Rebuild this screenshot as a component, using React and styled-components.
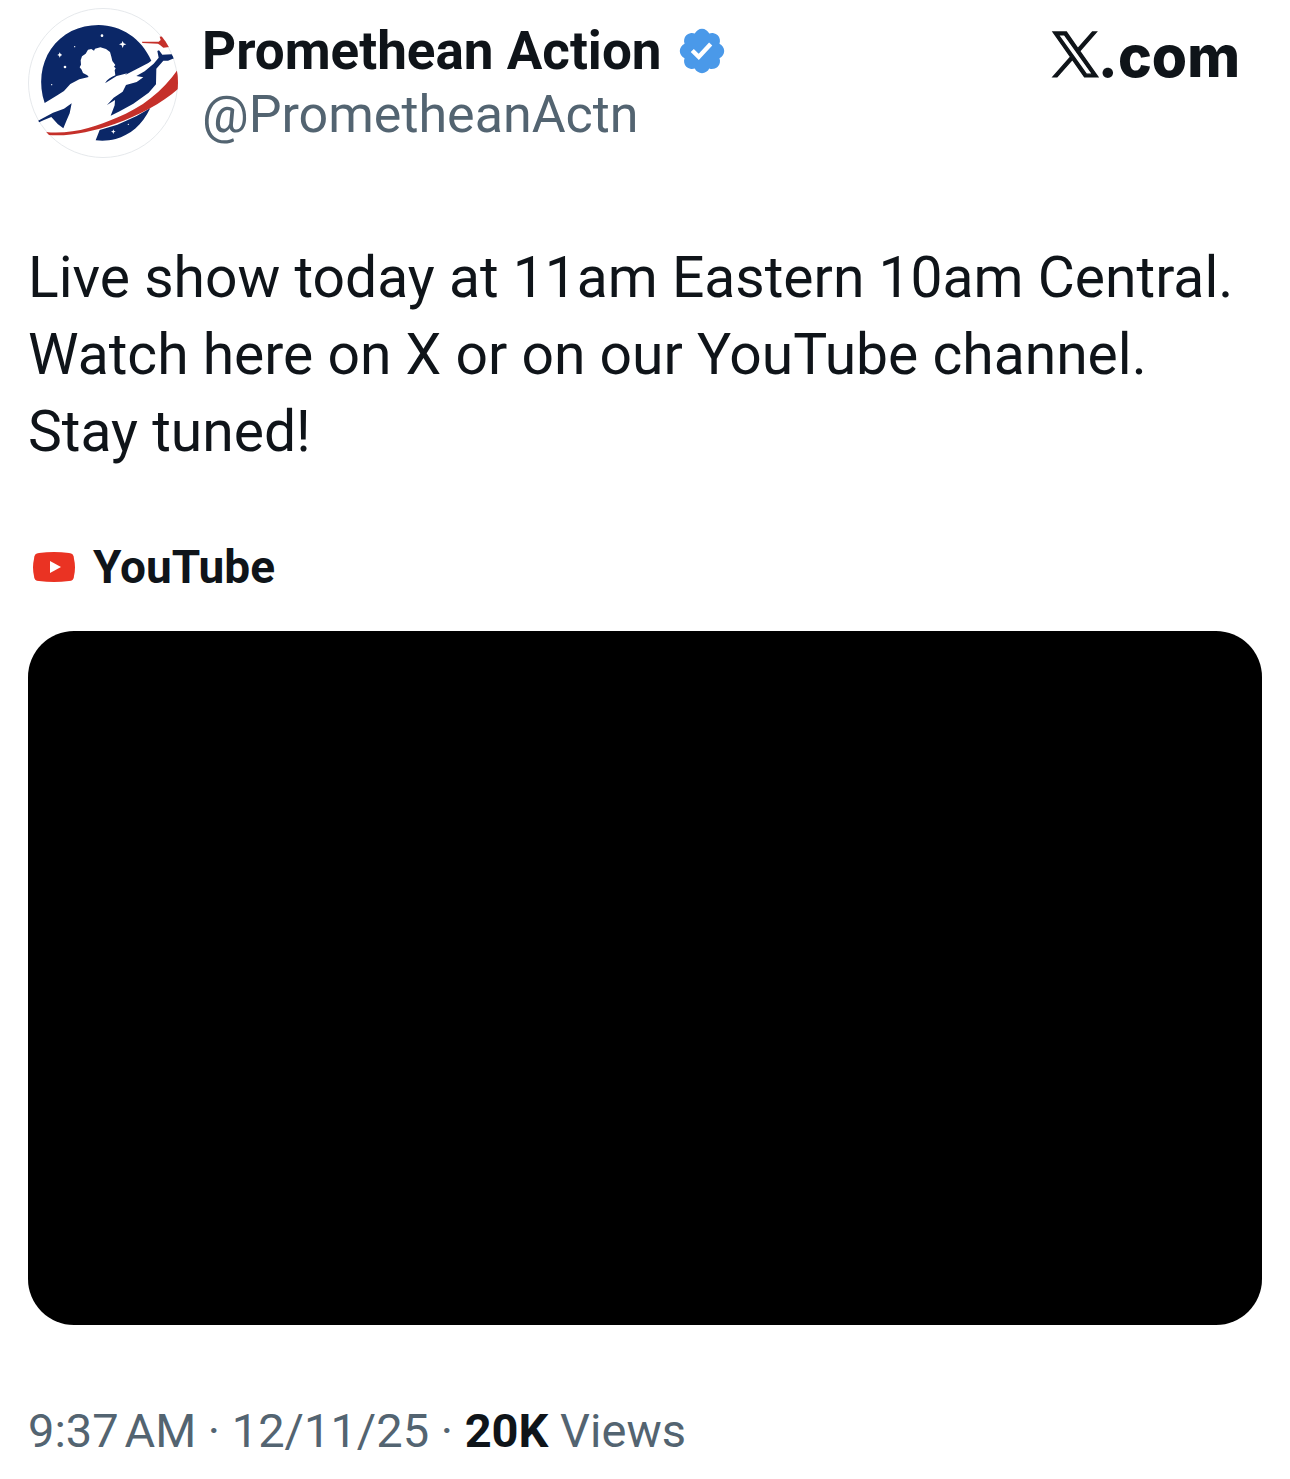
import React from 'react';
import styled, { createGlobalStyle } from 'styled-components';

const GlobalStyle = createGlobalStyle`
  body {
    margin: 0;
    background: #fff;
    color: #0f1419;
    font-family: Roboto, "Liberation Sans", sans-serif;
  }
`;

const Post = styled.article`
  padding: 8px 28px 0;
`;

const Header = styled.header`
  display: flex;
  align-items: flex-start;
`;

const Avatar = styled.svg`
  display: block;
  flex: none;
  width: 150px;
  height: 150px;
`;

const Author = styled.div`
  flex: 1;
  margin: 11px 0 0 24px;
`;

const NameRow = styled.div`
  display: flex;
  align-items: center;
  gap: 14px;
`;

const Name = styled.a`
  color: inherit;
  font-size: 53px;
  font-weight: 700;
  line-height: 64px;
  text-decoration: none;
`;

const Badge = styled.svg`
  width: 52px;
  height: 52px;
  fill: #4a99e9;
`;

const Handle = styled.a`
  display: block;
  color: #536471;
  font-size: 52px;
  line-height: 64px;
  text-decoration: none;
`;

const Site = styled.a`
  display: flex;
  align-items: baseline;
  margin: 13px 22px 0 0;
  color: inherit;
  font-family: Inter, "Liberation Sans", sans-serif;
  font-size: 57px;
  font-weight: 800;
  line-height: 72px;
  text-decoration: none;

  svg {
    width: 45px;
    height: 45px;
    fill: currentColor;
    stroke: currentColor;
    stroke-width: 0.7;
    overflow: visible;
  }
`;

const Body = styled.p`
  margin: 81px 0 0;
  font-size: 57px;
  line-height: 77px;
`;

const Source = styled.a`
  display: flex;
  align-items: center;
  gap: 18px;
  margin-top: 67px;
  padding-left: 5px;
  color: inherit;
  font-size: 46px;
  font-weight: 700;
  line-height: 60px;
  text-decoration: none;

  svg {
    width: 42px;
    height: 30px;
  }
`;

const Player = styled.div`
  margin-top: 34px;
  aspect-ratio: 1234 / 694;
  border-radius: 46px;
  background: #000;
`;

const Meta = styled.footer`
  margin-top: 76px;
  color: #536471;
  font-size: 47px;
  line-height: 60px;

  strong {
    color: #0f1419;
    font-weight: 700;
  }
`;

const AvatarImage = () => (
  <Avatar viewBox="24 22 450 450" role="img" aria-label="Promethean Action">
    <defs>
      <clipPath id="avatar">
        <circle cx="249" cy="247" r="225" />
      </clipPath>
    </defs>
    <circle cx="249" cy="247" r="223.5" fill="#fff" stroke="#e6e9ec" strokeWidth="3" />
    <g clipPath="url(#avatar)">
      {/* night sky */}
      <path
        fill="#0b2767"
        d="M74 307C55 251 62 190 93 145C125 98 178 73 236 73C303 74 364 112 394 180L385 187L314 224L322 218L290 226L255 248C262 236 272 229 286 224L284 209L287 203L282 198L286 193L277 181L274 168L270 154L258 145L241 140L225 144L222 150L214 145L204 147L197 159L186 167L182 179L183 192L179 200L185 207L189 217L202 224L206 229L178 236L151 250L132 271L112 284Z"
      />
      <path
        fill="#0b2767"
        d="M53 361L99 336L132 324L155 308L149 338L139 361L130 383L113 370L94 349L72 358L54 366Z"
      />
      <path
        fill="#0b2767"
        d="M261 313L281 291L308 273L318 253L350 244L370 230L349 226L374 212L401 189L416 171L412 151L417 149L427 162L455 161L462 173L444 180L430 180L409 204L408 251L386 276L340 309L299 332L272 345L284 314L285 298Z"
      />
      <path
        fill="#0b2767"
        d="M227 419L239 388L292 372L350 346L391 322C367 373 330 403 287 415C267 420 249 421 227 419Z"
      />
      <path
        fill="#c5302a"
        d="M77 394C158 402 229 377 290 351C365 321 429 271 475 204V264C427 307 355 345 284 370C214 394 148 408 84 403Z"
      />
      <path fill="#c5302a" d="M366 123L416 123L422 118L419 108L428 107L438 119L448 139L430 141L420 133L414 129L367 127Z" />
      <g fill="#fff">
        <path d="M308 121L311 128L319 131L311 134L308 142L305 134L297 131L305 128Z" />
        <path d="M119 155L122 160L127 163L122 165L119 171L117 165L112 163L117 160Z" />
        <path d="M280 386L282 391L287 393L282 395L280 400L278 395L273 393L278 391Z" />
        <circle cx="246" cy="105" r="4" />
        <circle cx="135" cy="199" r="4" />
        <circle cx="164" cy="138" r="2" />
        <circle cx="95" cy="252" r="2" />
        <circle cx="325" cy="371" r="2" />
      </g>
    </g>
  </Avatar>
);

const VerifiedBadge = () => (
  <Badge viewBox="0 0 22 22" role="img" aria-label="Verified account">
    <path d="M20.396 11c-.018-.646-.215-1.275-.57-1.816-.354-.54-.852-.972-1.438-1.246.223-.607.27-1.264.14-1.897-.131-.634-.437-1.218-.882-1.687-.47-.445-1.053-.75-1.687-.882-.633-.13-1.29-.083-1.897.14-.273-.587-.704-1.086-1.245-1.44S11.647 1.62 11 1.604c-.646.017-1.273.213-1.813.568s-.969.854-1.24 1.44c-.608-.223-1.267-.272-1.902-.14-.635.13-1.22.436-1.69.882-.445.47-.749 1.055-.878 1.688-.13.633-.08 1.29.144 1.896-.587.274-1.087.705-1.443 1.245-.356.54-.555 1.17-.574 1.817.02.647.218 1.276.574 1.817.356.54.856.972 1.443 1.245-.224.606-.274 1.263-.144 1.896.13.634.433 1.218.877 1.688.47.443 1.054.747 1.687.878.633.132 1.29.084 1.897-.136.274.586.705 1.084 1.246 1.439.54.354 1.17.551 1.816.569.647-.016 1.276-.213 1.817-.567s.972-.854 1.245-1.44c.604.239 1.266.296 1.903.164.636-.132 1.22-.447 1.68-.907.46-.46.776-1.044.908-1.681s.075-1.299-.165-1.903c.586-.274 1.084-.705 1.439-1.246.354-.54.551-1.17.569-1.816zM9.662 14.85l-3.429-3.428 1.293-1.302 2.072 2.072 4.4-4.794 1.347 1.246z" />
  </Badge>
);

const XLogo = () => (
  <svg viewBox="0 0 24 24" aria-hidden="true">
    <path d="M14.258 10.152L23.176 0h-2.113l-7.747 8.813L7.133 0H0l9.352 13.328L0 23.973h2.113l8.176-9.309 6.531 9.309h7.133zm-2.895 3.293l-.949-1.328L2.875 1.56h3.246l6.086 8.523.945 1.328 7.91 11.078h-3.246z" />
  </svg>
);

const YouTubeLogo = () => (
  <svg viewBox="0 0 42 30" aria-hidden="true">
    <path fill="#ea3323" d="M6 1Q21-1 36 1Q41 1 41 7Q43 15 41 24Q41 29 36 29Q21 31 6 29Q1 29 1 24Q-1 15 1 7Q1 1 6 1Z" />
    <path fill="#fff" d="M17 9L28 15L17 21Z" />
  </svg>
);

const App = () => (
  <>
    <GlobalStyle />
    <Post>
      <Header>
        <AvatarImage />
        <Author>
          <NameRow>
            <Name href="#profile">Promethean Action</Name>
            <VerifiedBadge />
          </NameRow>
          <Handle href="#profile">@PrometheanActn</Handle>
        </Author>
        <Site href="#home" aria-label="X.com">
          <XLogo />
          .com
        </Site>
      </Header>
      <Body>
        Live show today at 11am Eastern 10am Central.
        <br />
        Watch here on X or on our YouTube channel.
        <br />
        Stay tuned!
      </Body>
      <Source href="#youtube">
        <YouTubeLogo />
        YouTube
      </Source>
      <Player />
      <Meta>
        9:37{'\u202f'}AM · 12/11/25 · <strong>20K</strong> Views
      </Meta>
    </Post>
  </>
);

export default App;
